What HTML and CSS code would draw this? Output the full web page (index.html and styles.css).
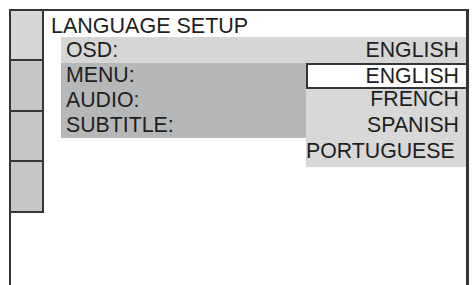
FILE: index.html
```html
<!DOCTYPE html>
<html>
<head>
<meta charset="utf-8">
<link rel="stylesheet" href="styles.css">
</head>
<body>
<div class="screen">
  <div class="sidebar">
    <div class="cell cell-a"></div>
    <div class="cell cell-b"></div>
    <div class="cell cell-a"></div>
    <div class="cell cell-b"></div>
  </div>
  <div class="main">
    <div class="title">LANGUAGE SETUP</div>
    <div class="menu">
      <div class="row row-osd"><span>OSD:</span><span>ENGLISH</span></div>
      <div class="group">
        <div class="row">MENU:</div>
        <div class="row">AUDIO:</div>
        <div class="row">SUBTITLE:</div>
      </div>
      <ul class="dropdown">
        <li class="opt opt-selected">ENGLISH</li>
        <li class="opt opt-french">FRENCH</li>
        <li class="opt opt-spanish">SPANISH</li>
        <li class="opt opt-port">PORTUGUESE</li>
      </ul>
    </div>
  </div>
</div>
</body>
</html>
```

FILE: styles.css
```css
html, body {
  margin: 0;
  padding: 0;
  background: #ffffff;
  overflow: hidden;
}
body {
  width: 476px;
  height: 285px;
  font-family: "Liberation Sans", Arial, sans-serif;
  color: #1e1e1e;
}
.screen {
  box-sizing: border-box;
  margin: 9px 0 0 9px;
  width: 460px;
  height: 276px;
  border-top: 2px solid #353535;
  border-left: 2px solid #353535;
  border-right: 3px solid #353535;
  display: flex;
}
.sidebar {
  width: 33px;
  display: flex;
  flex-direction: column;
}
.cell {
  box-sizing: content-box;
  border-right: 2px solid #353535;
  border-bottom: 2px solid #353535;
  background: #c6c6c6;
}
.cell-a { height: 48px; }
.cell-b { height: 49px; }
.sidebar .cell:first-child { background: #d6d6d6; }
.main {
  flex: 1;
  display: flex;
  flex-direction: column;
}
.title {
  margin-top: 4px;
  padding-left: 7px;
  font-size: 21.5px;
  line-height: 22px;
}
.menu {
  position: relative;
  margin-left: 17px;
  font-size: 21.3px;
}
.row {
  padding-left: 5px;
  line-height: 25px;
  height: 25px;
}
.row-osd {
  display: flex;
  justify-content: space-between;
  padding-right: 7px;
  line-height: 26px;
  height: 26px;
  background: #d6d6d6;
}
.group {
  width: 245px;
  background: #b5b7b9;
}
.dropdown {
  position: absolute;
  left: 245px;
  top: 26px;
  right: 0;
  margin: 0;
  padding: 0 0 3px 0;
  list-style: none;
  background: #d8d8d8;
  text-align: right;
}
.opt {
  padding-right: 7px;
  line-height: 26px;
  height: 26px;
}
.opt-selected {
  box-sizing: border-box;
  height: 26px;
  line-height: 22px;
  background: #ffffff;
  border: 2px solid #353535;
  border-right: none;
}
.opt-french {
  line-height: 20px;
  height: 23px;
}
.opt-port { padding-right: 12px; }
```
